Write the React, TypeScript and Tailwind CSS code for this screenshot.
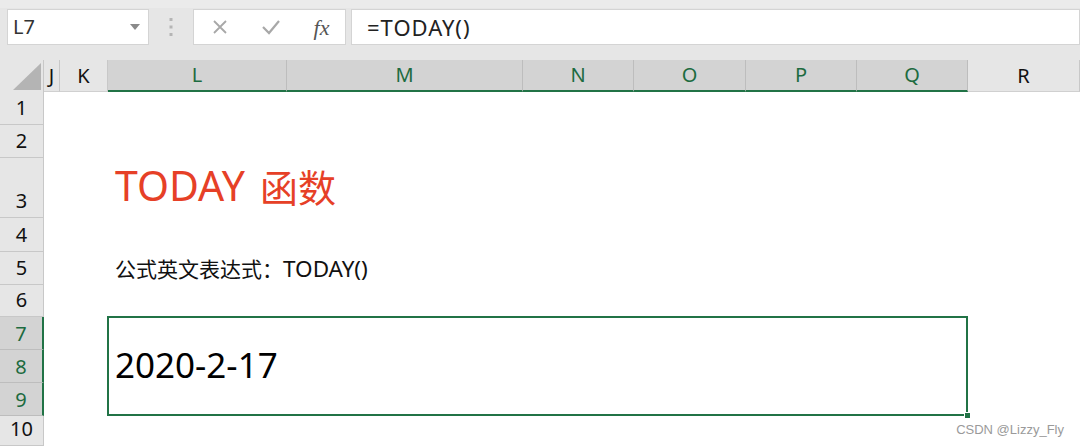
import React from "react";

const font = { fontFamily: '"Noto Sans", "Noto Sans CJK SC", sans-serif' };

// column header cells, widths read off the sheet
const cols = [
  { label: "J", w: "w-[16px]", sel: false },
  { label: "K", w: "w-[48px]", sel: false },
  { label: "L", w: "w-[179px]", sel: true },
  { label: "M", w: "w-[236px]", sel: true },
  { label: "N", w: "w-[111px]", sel: true },
  { label: "O", w: "w-[112px]", sel: true },
  { label: "P", w: "w-[111px]", sel: true },
  { label: "Q", w: "w-[111px]", sel: true },
  { label: "R", w: "w-[112px]", sel: false },
];

const rows = [
  { n: 1, h: "h-[33px]", sel: false },
  { n: 2, h: "h-[33px]", sel: false },
  { n: 3, h: "h-[60px]", sel: false },
  { n: 4, h: "h-[34px]", sel: false },
  { n: 5, h: "h-[33px]", sel: false },
  { n: 6, h: "h-[32px]", sel: false },
  { n: 7, h: "h-[33px]", sel: true },
  { n: 8, h: "h-[33px]", sel: true },
  { n: 9, h: "h-[33px]", sel: true },
  { n: 10, h: "h-[30px]", sel: false },
];

const FormulaBar = () => {
  return (
    <div className="h-[60px] bg-[#e6e6e6] flex items-start pt-[9px] px-[7px] gap-0 border-t-[8px] border-[#ebebeb] box-border">
      {/* Name box */}
      <div className="w-[142px] h-[36px] -mt-[8px] bg-white border border-[#d4d4d4] flex items-center justify-between pl-[5px] pr-[8px]">
        <span className="text-[20px] text-[#333]">L7</span>
        <svg width="10" height="6" viewBox="0 0 10 6">
          <path d="M0 0 L10 0 L5 6 Z" fill="#8a8a8a" />
        </svg>
      </div>

      {/* dots */}
      <div className="w-[44px] h-[36px] -mt-[8px] flex items-center justify-center">
        <svg width="4" height="18" viewBox="0 0 4 18">
          <rect x="0.5" y="0" width="3" height="3" fill="#b5b5b5" />
          <rect x="0.5" y="7.5" width="3" height="3" fill="#b5b5b5" />
          <rect x="0.5" y="15" width="3" height="3" fill="#b5b5b5" />
        </svg>
      </div>

      {/* cancel / enter / fx */}
      <div className="w-[153px] h-[36px] -mt-[8px] bg-white border border-[#d4d4d4] flex items-center">
        <div className="w-[50px] flex justify-center pl-[2px]">
          <svg width="16" height="16" viewBox="0 0 16 16">
            <path d="M2 2 L14 14 M14 2 L2 14" stroke="#a8a8a8" strokeWidth="1.8" />
          </svg>
        </div>
        <div className="w-[54px] flex justify-center">
          <svg width="20" height="16" viewBox="0 0 20 16">
            <path d="M2 8 L8 14 L18 2" stroke="#a8a8a8" strokeWidth="2.2" fill="none" />
          </svg>
        </div>
        <div className="flex-1 flex justify-center">
          <span
            className="text-[22px] italic text-[#555]"
            style={{ fontFamily: '"Liberation Serif", "DejaVu Serif", serif' }}
          >
            fx
          </span>
        </div>
      </div>

      {/* formula */}
      <div className="flex-1 h-[36px] -mt-[8px] ml-[5px] -mr-[7px] bg-white border border-[#d4d4d4] flex items-center pl-[15px]">
        <span className="text-[22px] tracking-[1px] text-[#222]">=TODAY()</span>
      </div>
    </div>
  );
};

const ColumnHeaders = () => {
  return (
    <div className="flex h-[32px] bg-[#e6e6e6]">
      {/* corner */}
      <div className="w-[44px] h-full flex items-end justify-end pr-[2px] pb-[2px] border-r border-[#c8c8c8]">
        <svg width="28" height="27" viewBox="0 0 28 27">
          <path d="M28 0 L28 27 L0 27 Z" fill="#b4b4b4" />
        </svg>
      </div>

      {cols.map((c) => (
        <div
          key={c.label}
          className={
            c.sel
              ? `${c.w} h-full flex items-center justify-center bg-[#d3d3d3] border-r border-[#bdbdbd] border-b-[2px] border-b-[#217346] text-[#1d6b40] text-[20px]`
              : `${c.w} h-full flex items-center justify-center border-r border-[#c8c8c8] border-b border-b-[#d0d0d0] text-[#111] text-[20px]`
          }
        >
          {c.label}
        </div>
      ))}
    </div>
  );
};

const RowHeaders = () => {
  return (
    <div className="w-[44px] shrink-0 flex flex-col bg-[#e6e6e6]">
      {rows.map((r) => (
        <div
          key={r.n}
          className={
            r.sel
              ? `${r.h} flex items-end justify-center pb-[5px] bg-[#d3d3d3] border-b border-[#bdbdbd] border-r-[2px] border-r-[#217346] text-[#1d6b40] text-[20px] leading-none`
              : `${r.h} flex items-end justify-center pb-[6px] border-b border-[#c8c8c8] border-r border-r-[#c8c8c8] text-[#111] text-[20px] leading-none`
          }
        >
          {r.n}
        </div>
      ))}
    </div>
  );
};

export default function App() {
  return (
    <div className="w-[1080px] h-[446px] overflow-hidden bg-white relative" style={font}>
      <FormulaBar />
      <ColumnHeaders />

      <div className="flex">
        <RowHeaders />

        {/* Sheet */}
        <div className="flex-1 flex flex-col">
          <div className="h-[33px]" />
          <div className="h-[33px]" />
          <div className="h-[60px] flex items-end pl-[71px] pb-[12px] text-[#e64027] leading-none">
            <span className="text-[41px]">TODAY</span>
            <span className="text-[38px] ml-[15px]">函数</span>
          </div>
          <div className="h-[34px]" />
          <div className="h-[33px] flex items-end pl-[71px] pb-[5px] text-[#111] leading-none">
            <span className="text-[21px]">公式英文表达式：</span>
            <span className="text-[22.5px]">TODAY()</span>
          </div>
          <div className="h-[31px]" />

          {/* Selected merged cell L7:Q9 */}
          <div className="ml-[63px] w-[861px] h-[100px] border-2 border-[#217346] relative flex items-center pl-[6px] pb-[4px]">
            <span className="text-[35px] leading-none text-black">2020-2-17</span>
            <div className="absolute -right-[5px] -bottom-[5px] w-[7px] h-[7px] bg-[#217346] border border-white" />
          </div>
        </div>
      </div>

      <div
        className="absolute right-[16px] bottom-[7px] text-[13px] text-[#9a9a9a]"
        style={{ fontFamily: '"Liberation Sans", Arial, sans-serif' }}
      >
        CSDN @Lizzy_Fly
      </div>
    </div>
  );
}
